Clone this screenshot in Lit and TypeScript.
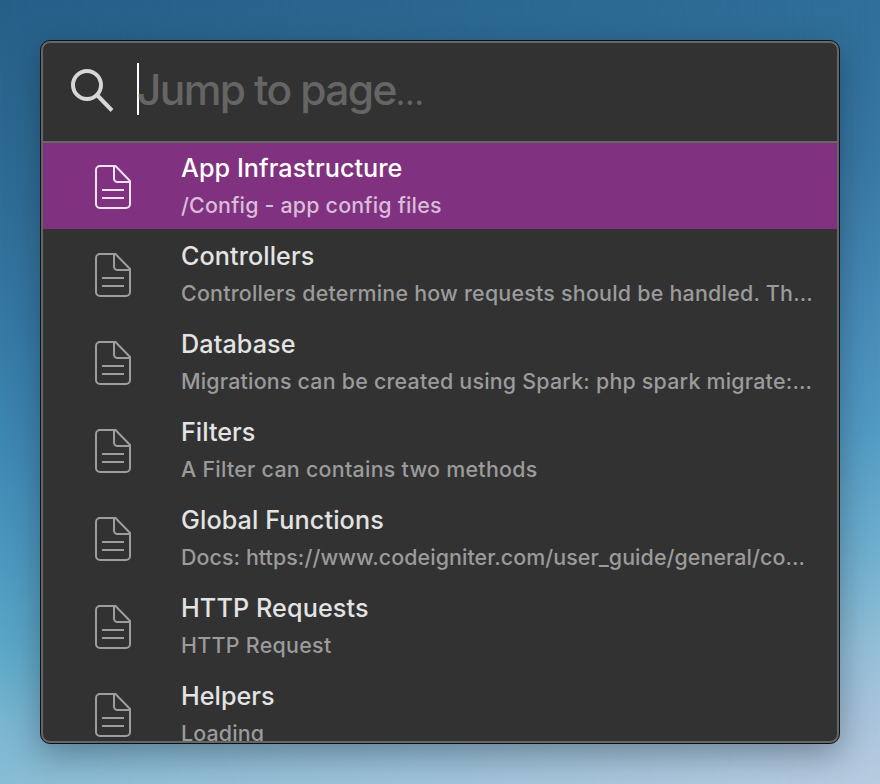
import { LitElement, html, css, svg } from "lit";
import { customElement, property } from "lit/decorators.js";
import { classMap } from "lit/directives/class-map.js";

interface Page {
  title: string;
  summary: string;
  titleTracking: number;
  summaryTracking: number;
}

const PAGES: Page[] = [
  { title: "App Infrastructure", summary: "/Config - app config files", titleTracking: 0.05, summaryTracking: 0.2 },
  { title: "Controllers", summary: "Controllers determine how requests should be handled. Th…", titleTracking: 0.06, summaryTracking: 0.24 },
  { title: "Database", summary: "Migrations can be created using Spark: php spark migrate:…", titleTracking: 0.08, summaryTracking: 0.22 },
  { title: "Filters", summary: "A Filter can contains two methods", titleTracking: 0, summaryTracking: 0.27 },
  { title: "Global Functions", summary: "Docs: https://www.codeigniter.com/user_guide/general/co…", titleTracking: 0.1, summaryTracking: 0.08 },
  { title: "HTTP Requests", summary: "HTTP Request", titleTracking: 0.1, summaryTracking: 0.3 },
  { title: "Helpers", summary: "Loading", titleTracking: 0, summaryTracking: 0.15 },
];

const documentIcon = svg`
  <path d="M5 1H20.5L35 16V39a4 4 0 0 1-4 4H5a4 4 0 0 1-4-4V5a4 4 0 0 1 4-4Z"/>
  <path d="M19 1V13.500a3.500 3.500 0 0 0 3.500 3.500H35M7 25H29M7 33H29"/>`;

@customElement("page-row")
export class PageRow extends LitElement {
  @property({ attribute: false }) page!: Page;
  @property({ type: Boolean, reflect: true }) selected = false;

  static styles = css`
    :host { display: block; flex: none; height: 88px; }
    .row {
      display: flex;
      height: 88px;
      box-sizing: border-box;
      padding: 24px 20px 0 52px;
      color: #e3e3e3;
    }
    .icon {
      flex: none;
      width: 36px;
      height: 44px;
      fill: none;
      stroke: #9d9d9d;
      stroke-width: 2;
      stroke-linejoin: round;
    }
    .text { margin: -15px 0 0 50px; min-width: 0; white-space: nowrap; }
    .title { font-size: 25.2px; line-height: 36px; font-weight: 500; }
    .summary { font-size: 21.4px; line-height: 38px; color: #9b9b9b; font-weight: 500; }
    .selected { background: #803280; color: #fff; }
    .selected .icon { stroke: #f0e2f0; }
    .selected .summary { color: #d9bcd9; }
  `;

  render() {
    const { title, summary, titleTracking, summaryTracking } = this.page;
    return html`
      <div class=${classMap({ row: true, selected: this.selected })}>
        <svg class="icon" viewBox="0 0 36 44">${documentIcon}</svg>
        <div class="text">
          <div class="title" style="letter-spacing:${titleTracking}px">${title}</div>
          <div class="summary" style="letter-spacing:${summaryTracking}px">${summary}</div>
        </div>
      </div>
    `;
  }
}

@customElement("app-root")
export class AppRoot extends LitElement {
  static styles = css`
    :host {
      display: block;
      position: relative;
      isolation: isolate;
      box-sizing: border-box;
      width: 880px;
      height: 784px;
      padding: 40px;
      overflow: hidden;
      font-family: Inter, "Liberation Sans", sans-serif;
      background: linear-gradient(180deg, #265f89 0, #2f6d96 200px, #3579a5 330px, #3e88b4 450px, #4b98bf 560px, #5ba7c8 650px, #78b5d0 720px, #8abdd5 784px);
    }
    /* Lighter right-hand half of the wallpaper, faded in from the left. */
    :host::before {
      content: "";
      position: absolute;
      inset: 0;
      z-index: -1;
      background: linear-gradient(180deg, #2f6e98 0, #3777a3 150px, #468ab6 300px, #529bc4 430px, #6fafcf 550px, #95c0d8 650px, #abc4dd 720px, #b8cbe0 784px);
      mask-image: linear-gradient(90deg, transparent, #000);
    }
    .window {
      display: flex;
      flex-direction: column;
      box-sizing: border-box;
      width: 800px;
      height: 704px;
      border: 1px solid #0c1318;
      border-radius: 10px;
      background: #666;
      padding: 2px;
      box-shadow: 0 10px 32px rgba(20, 30, 40, 0.38);
    }
    .panel {
      display: flex;
      flex-direction: column;
      flex: 1;
      min-height: 0;
      overflow: hidden;
      border-radius: 7px;
      background: #323232;
    }
    .search {
      display: flex;
      flex: none;
      height: 98px;
      border-bottom: 2px solid #666;
      padding-left: 27px;
    }
    .glass {
      flex: none;
      width: 44px;
      height: 44px;
      margin-top: 26px;
      fill: none;
      stroke: #d6d6d6;
      stroke-width: 4;
    }
    .caret { flex: none; width: 2px; height: 52px; margin: 20px 0 0 23px; background: #fff; }
    .placeholder {
      margin: 20px 0 0 -2px;
      font-size: 42.5px;
      font-weight: 450;
      line-height: 54px;
      letter-spacing: -1.65px;
      color: #656565;
      white-space: nowrap;
    }
    .dots { font-size: 31px; font-weight: 550; letter-spacing: 0; line-height: 1; }
    .list {
      display: flex;
      flex-direction: column;
      flex: 1;
      justify-content: flex-start;
      min-height: 0;
      overflow: hidden;
    }
    .list page-row:first-child { margin-top: -2px; }
  `;

  render() {
    return html`
      <div class="window">
        <div class="panel">
          <div class="search">
            <svg class="glass" viewBox="0 0 44 44">
              <circle cx="17" cy="16" r="14"/>
              <path d="M26.500 25.500L42 41.500"/>
            </svg>
            <div class="caret"></div>
            <div class="placeholder">Jump to page<span class="dots">…</span></div>
          </div>
          <div class="list">
            ${PAGES.map((page, i) => html`<page-row .page=${page} ?selected=${i === 0}></page-row>`)}
          </div>
        </div>
      </div>
    `;
  }
}
